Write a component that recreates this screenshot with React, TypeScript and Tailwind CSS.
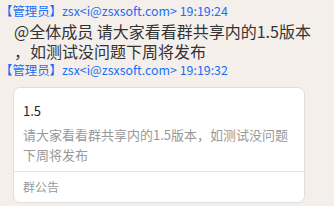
export default function App() {
  const font = { fontFamily: '"Microsoft YaHei", "Noto Sans CJK SC", sans-serif' }
  return (
    <div className="h-[206px] w-[334px] overflow-hidden bg-[#f5efeb] pt-[3px] text-[#333]" style={font}>
      <div className="whitespace-nowrap text-[12.4px] leading-[16px] text-[#1a6ef5]">
        【管理员】zsx&lt;i@zsxsoft.com&gt; 19:19:24
      </div>
      <div className="pl-[14px] pt-[1px] text-[16px] leading-[22px] text-[#333]">
        <div className="whitespace-nowrap">@全体成员 请大家看看群共享内的1.5版本</div>
        <div className="-mt-[2px] whitespace-nowrap">，如测试没问题下周将发布</div>
      </div>
      <div className="whitespace-nowrap text-[12.4px] leading-[16px] text-[#1a6ef5]">
        【管理员】zsx&lt;i@zsxsoft.com&gt; 19:19:32
      </div>
      <div className="ml-[13px] mt-[9px] w-[292px] rounded-[7px] border border-[#e2ddd9] bg-white">
        <div className="px-[9px] pt-[13px] text-[13px] leading-[20px] text-[#222]">1.5</div>
        <div className="px-[9px] pt-[4px] pb-[6px] text-[13px] leading-[20px] text-[#999]">
          <div className="whitespace-nowrap">请大家看看群共享内的1.5版本，如测试没问题</div>
          <div className="whitespace-nowrap">下周将发布</div>
        </div>
        <div className="border-t border-[#e6e3e0] px-[9px] py-[4px] text-[12px] leading-[22px] text-[#999]">
          群公告
        </div>
      </div>
    </div>
  )
}
